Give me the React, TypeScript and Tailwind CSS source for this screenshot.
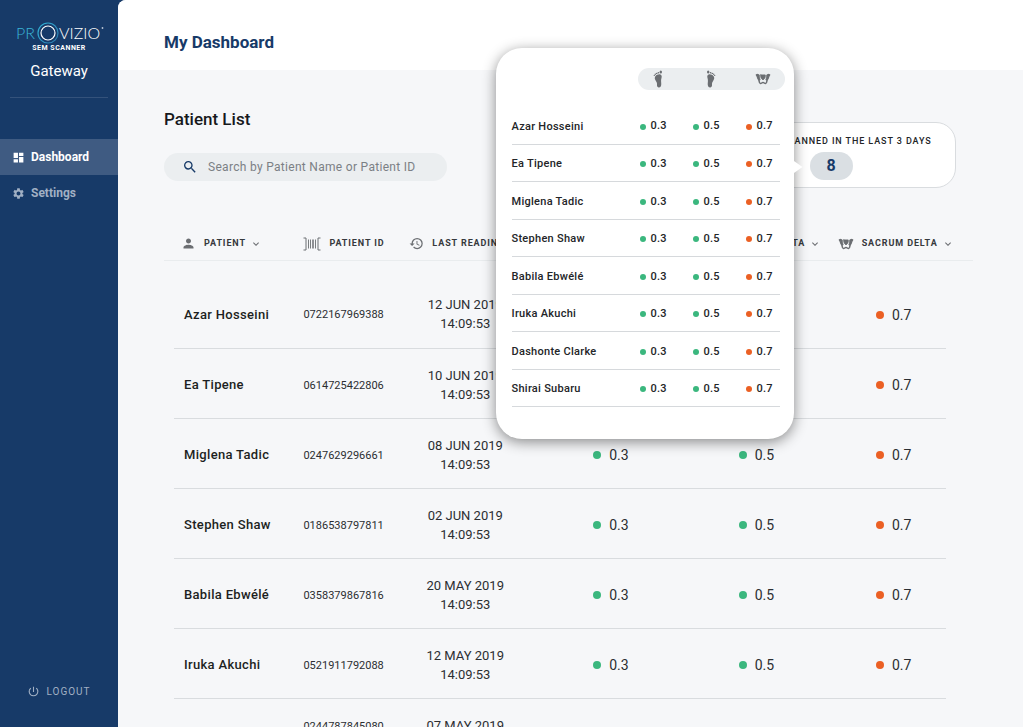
import React, { useState } from 'react';
import {
  MdDashboard,
  MdHistory,
  MdKeyboardArrowDown,
  MdPerson,
  MdPowerSettingsNew,
  MdSearch,
  MdSettings,
} from 'react-icons/md';

interface Patient {
  name: string;
  id: string;
  date: string;
  time: string;
}

const patients: Patient[] = [
  { name: 'Azar Hosseini', id: '0722167969388', date: '12 JUN 2019', time: '14:09:53' },
  { name: 'Ea Tipene', id: '0614725422806', date: '10 JUN 2019', time: '14:09:53' },
  { name: 'Miglena Tadic', id: '0247629296661', date: '08 JUN 2019', time: '14:09:53' },
  { name: 'Stephen Shaw', id: '0186538797811', date: '02 JUN 2019', time: '14:09:53' },
  { name: 'Babila Ebwélé', id: '0358379867816', date: '20 MAY 2019', time: '14:09:53' },
  { name: 'Iruka Akuchi', id: '0521911792088', date: '12 MAY 2019', time: '14:09:53' },
  { name: 'Dashonte Clarke', id: '0244787845080', date: '07 MAY 2019', time: '14:09:53' },
];

const recentlyScanned = [
  'Azar Hosseini',
  'Ea Tipene',
  'Miglena Tadic',
  'Stephen Shaw',
  'Babila Ebwélé',
  'Iruka Akuchi',
  'Dashonte Clarke',
  'Shirai Subaru',
];

const FootIcon: React.FC<{ className?: string }> = ({ className = '' }) => (
  <svg viewBox="0 0 12 18" className={`h-[18px] w-3 ${className}`} fill="currentColor" aria-hidden="true">
    <ellipse cx="8.8" cy="2" rx="1.2" ry="1.5" />
    <ellipse cx="6.4" cy="2.8" rx="0.9" ry="0.8" />
    <ellipse cx="4.7" cy="3.4" rx="0.8" ry="0.7" />
    <ellipse cx="3.3" cy="4.3" rx="0.7" ry="0.7" />
    <ellipse cx="2.3" cy="5.4" rx="0.6" ry="0.6" />
    <path d="M8.4 4.4C9.6 4.9 9.9 6.2 9.6 7.6C9.3 9 9 9.8 9.1 11.4C9.2 13 9.4 14 9.1 15.5C8.8 17 7.8 17.6 6.6 17.4C5.3 17.1 4.9 16.1 5 14.7C5.1 13.3 4.8 12.3 3.9 11C2.9 9.6 2.3 8.2 3.2 6.6C4.2 4.9 6.5 4 8.4 4.4Z" />
  </svg>
);

const SacrumIcon: React.FC = () => (
  <svg viewBox="0 0 16 12" className="h-3 w-4" fill="none" stroke="currentColor" strokeLinecap="round" strokeLinejoin="round" aria-hidden="true">
    {/* iliac wings */}
    <path d="M1.2 2C2.2 1.1 3.4 1.3 4.2 2.3C3.9 4 4.3 5.2 5 6.6L3.6 6.9C2.4 5.8 2.6 3.6 1.2 2Z" fill="currentColor" strokeWidth="1.1" />
    <path d="M14.8 2C13.8 1.1 12.6 1.3 11.8 2.3C12.1 4 11.7 5.2 11 6.6L12.4 6.9C13.6 5.8 13.4 3.6 14.8 2Z" fill="currentColor" strokeWidth="1.1" />
    {/* sacrum */}
    <path d="M5.8 1.9H10.2C10.8 3.8 9.6 5.8 8 6.9C6.4 5.8 5.2 3.8 5.8 1.9Z" fill="currentColor" strokeWidth="0.8" />
    {/* pubic arch */}
    <path d="M4 7.2C4.2 8.6 4.2 10.4 5.4 10.5C6.6 10.6 6.8 9.5 8 9.5C9.2 9.5 9.4 10.6 10.6 10.5C11.8 10.4 11.8 8.6 12 7.2" strokeWidth="1.5" />
  </svg>
);

const BarcodeIcon: React.FC = () => (
  <svg viewBox="0 0 18 14" className="h-3.5 w-[18px]" fill="none" stroke="currentColor" aria-hidden="true">
    <path d="M0.5 1H3V13H0.5M17.5 1H15V13H17.5" strokeWidth="1" />
    <path d="M5.5 2.5V11.5M7.5 2.5V11.5M12.5 2.5V11.5" strokeWidth="0.9" />
    <path d="M10 2.5V11.5" strokeWidth="1.5" />
  </svg>
);

const Logo: React.FC = () => (
  <svg viewBox="0 0 90 30" className="h-[30px] w-[90px]" role="img" aria-label="Provizio SEM Scanner">
    <defs>
      <linearGradient id="ring" x1="0" y1="0" x2="1" y2="1">
        <stop offset="0" stopColor="#2fb4d8" />
        <stop offset="1" stopColor="#2b78ad" />
      </linearGradient>
    </defs>
    <text x="2" y="18" fontSize="16" fontWeight="300" fill="#39b3d6" className="font-[Lato,sans-serif]">PR</text>
    <circle cx="34" cy="12" r="10" fill="none" stroke="url(#ring)" strokeWidth="1.2" />
    <circle cx="34" cy="12" r="7" fill="none" stroke="#fff" strokeWidth="1.2" />
    <text x="45" y="18" fontSize="16" fontWeight="300" fill="#fff" className="font-[Lato,sans-serif]">VIZIO</text>
    <circle cx="88.5" cy="7" r="0.9" fill="#b9c6d6" />
    <text x="45" y="29" fontSize="7" fontWeight="700" letterSpacing="0.5" textAnchor="middle" fill="#fff">SEM SCANNER</text>
  </svg>
);

const Reading: React.FC<{ value: string; high?: boolean; small?: boolean }> = ({ value, high, small }) => (
  <span className={`inline-flex items-center ${small ? 'gap-[5px]' : 'gap-2'}`}>
    <span
      className={`rounded-full ${small ? 'size-1.5' : 'size-2'} ${high ? 'bg-[#eb6024]' : 'bg-[#3bb77e]'}`}
    />
    {value}
  </span>
);

const ColumnTitle: React.FC<{ icon: React.ReactNode; label: string; sortable?: boolean; className?: string }> = ({
  icon,
  label,
  sortable,
  className = '',
}) => (
  <div className={`flex items-center gap-2 whitespace-nowrap ${className}`}>
    <span className="text-[#6b6e72]">{icon}</span>
    {sortable ? (
      <button type="button" className="flex items-center gap-1 tracking-widest">
        {label}
        <MdKeyboardArrowDown className="size-3 text-[#6b6e72]" />
      </button>
    ) : (
      label
    )}
  </div>
);

const Sidebar: React.FC = () => (
  <aside className="flex w-[118px] shrink-0 flex-col text-white">
    <div className="mx-2.5 flex flex-col items-center border-b border-[#34527b] pt-[21px] pb-[15px]">
      <Logo />
      <p className="mt-[9px] text-[15px] leading-[22px]">Gateway</p>
    </div>
    <nav className="mt-[41px] text-xs font-bold">
      <a href="#dashboard" aria-current="page" className="flex h-9 items-center gap-1.5 bg-[#3f5b82] pl-3">
        <MdDashboard className="size-[13px]" />
        Dashboard
      </a>
      <a href="#settings" className="flex h-9 items-center gap-1.5 pl-3 text-[#a1b0c4]">
        <MdSettings className="size-[13px]" />
        Settings
      </a>
    </nav>
    <button type="button" className="mt-auto mb-7 flex items-center justify-center gap-1.5 text-[10px] tracking-widest text-[#a1b0c4]">
      <MdPowerSettingsNew className="size-[13px]" />
      LOGOUT
    </button>
  </aside>
);

const ScannedPopover: React.FC = () => (
  <div className="absolute -top-[104px] right-full z-10 mr-4 w-[298px] rounded-[26px] bg-white pt-5 pr-[9px] pb-8 pl-4 shadow-[0_3px_14px_rgba(0,0,0,0.45)]">
    <span className="absolute top-[112px] -right-[9px] h-3.5 w-2.5 bg-white [clip-path:polygon(0_0,100%_50%,0_100%)]" />
    <table className="w-full table-fixed text-left text-[11px] font-medium tracking-wide text-[#232528]">
      <colgroup>
        <col />
        <col className="w-[53px]" />
        <col className="w-[53px]" />
        <col className="w-9" />
        <col className="w-[5px]" />
      </colgroup>
      <thead>
        <tr className="h-[22px] text-[#6b6e72]">
          <td />
          <th aria-label="Left heel" className="rounded-l-full bg-[#ebeef0] pl-3.5">
            <FootIcon />
          </th>
          <th aria-label="Right heel" className="bg-[#ebeef0] pl-3.5">
            <FootIcon className="-scale-x-100" />
          </th>
          <th aria-label="Sacrum" colSpan={2} className="rounded-r-full bg-[#ebeef0] pl-[11px]">
            <SacrumIcon />
          </th>
        </tr>
      </thead>
      <tbody className="before:block before:h-4 before:content-['']">
        {recentlyScanned.map((name) => (
          <tr key={name} className="odd:h-[38px] even:h-[37px]">
            <th scope="row" className="border-b border-[#d6d9dc] pt-1 font-medium">{name}</th>
            <td className="border-b border-[#d6d9dc] pt-1 pl-0.5"><Reading small value="0.3" /></td>
            <td className="border-b border-[#d6d9dc] pt-1 pl-0.5"><Reading small value="0.5" /></td>
            <td className="border-b border-[#d6d9dc] pt-1 pl-0.5"><Reading small high value="0.7" /></td>
            <td />
          </tr>
        ))}
      </tbody>
    </table>
  </div>
);

const ScannedCard: React.FC = () => {
  const [open, setOpen] = useState(true);

  return (
    <section className="mt-[15px] mr-[17px] flex h-[66px] w-[250px] flex-col items-center rounded-[20px] border border-[#d9dcdf] bg-white pt-2.5">
      <h3 className="text-[9px] leading-4 font-medium tracking-widest whitespace-nowrap text-[#232528]">
        PATIENTS SCANNED IN THE LAST 3 DAYS
      </h3>
      <div className="relative mt-[3px]">
        <button
          type="button"
          aria-expanded={open}
          onClick={() => setOpen(!open)}
          className="h-7 w-[43px] rounded-full bg-[#dadfe3] text-base font-bold text-[#173a68]"
        >
          8
        </button>
        {open && <ScannedPopover />}
      </div>
    </section>
  );
};

const PatientTable: React.FC = () => (
  <table className="mt-10 w-full table-fixed text-left">
    <colgroup>
      <col className="w-2.5" />
      <col className="w-[16%]" />
      <col className="w-[12%]" />
      <col className="w-[16%]" />
      <col className="w-[20%]" />
      <col className="w-[16%]" />
      <col />
      <col className="w-[27px]" />
    </colgroup>
    <thead className="text-[9px] font-bold tracking-widest text-[#36393d]">
      <tr className="h-8 border-b border-[#e9ecee]">
        <td />
        <th><ColumnTitle sortable icon={<MdPerson className="size-[15px]" />} label="PATIENT" className="pl-[7px]" /></th>
        <th><ColumnTitle icon={<BarcodeIcon />} label="PATIENT ID" /></th>
        <th><ColumnTitle sortable icon={<MdHistory className="size-[15px]" />} label="LAST READING" className="justify-center" /></th>
        <th><ColumnTitle sortable icon={<FootIcon />} label="LEFT HEEL DELTA" className="justify-center" /></th>
        <th><ColumnTitle sortable icon={<FootIcon className="-scale-x-100" />} label="RIGHT HEEL DELTA" className="justify-end" /></th>
        <th className="pl-6"><ColumnTitle sortable icon={<SacrumIcon />} label="SACRUM DELTA" className="justify-center" /></th>
        <td />
      </tr>
    </thead>
    <tbody className="text-sm text-[#2b2e31] before:block before:h-[18px] before:content-['']">
      {patients.map((patient, index) => (
        <tr key={patient.id} className="h-[70px]">
          <td />
          <th scope="row" className="border-b border-[#d9dcdf] pt-1 pl-2.5 text-[13px] font-medium tracking-wide text-[#1d1f22]">
            {patient.name}
          </th>
          <td className={`border-b border-[#d9dcdf] text-[11px] ${index === patients.length - 1 ? 'pt-5 align-top' : 'pt-1'}`}>
            {patient.id}
          </td>
          <td className="border-b border-[#d9dcdf] pt-0.5 text-center text-[13px] leading-[19px]">
            {patient.date}
            <br />
            {patient.time}
          </td>
          <td className="border-b border-[#d9dcdf] pt-0.5 text-center"><Reading value="0.3" /></td>
          <td className="border-b border-[#d9dcdf] pt-0.5 text-center"><Reading value="0.5" /></td>
          <td className="border-b border-[#d9dcdf] pt-0.5 pl-5 text-center"><Reading high value="0.7" /></td>
          <td />
        </tr>
      ))}
    </tbody>
  </table>
);

const App: React.FC = () => {
  return (
    <div className="flex h-screen overflow-hidden bg-[#173a68] font-[Roboto,sans-serif]">
      <Sidebar />
      <div className="min-w-0 flex-1 overflow-hidden rounded-tl-lg bg-[#f6f7f9]">
        <header className="flex h-[70px] items-center bg-white pt-4 pl-[46px]">
          <h1 className="text-[17px] font-bold text-[#173a68]">My Dashboard</h1>
        </header>
        <main className="pt-[37px] pr-[50px] pl-[46px]">
          <div className="flex items-start justify-between">
            <div>
              <h2 className="text-[17px] leading-6 font-medium text-[#17191c]">Patient List</h2>
              <label className="mt-[22px] flex h-7 w-[283px] items-center gap-2.5 rounded-full bg-[#ebeef0] px-[18px]">
                <MdSearch className="size-4 shrink-0 text-[#173a68]" />
                <input
                  type="search"
                  aria-label="Search patients"
                  placeholder="Search by Patient Name or Patient ID"
                  className="min-w-0 flex-1 bg-transparent text-xs tracking-wide outline-none placeholder:text-[#7b8085]"
                />
              </label>
            </div>
            <ScannedCard />
          </div>
          <PatientTable />
        </main>
      </div>
    </div>
  );
};

export default App;
